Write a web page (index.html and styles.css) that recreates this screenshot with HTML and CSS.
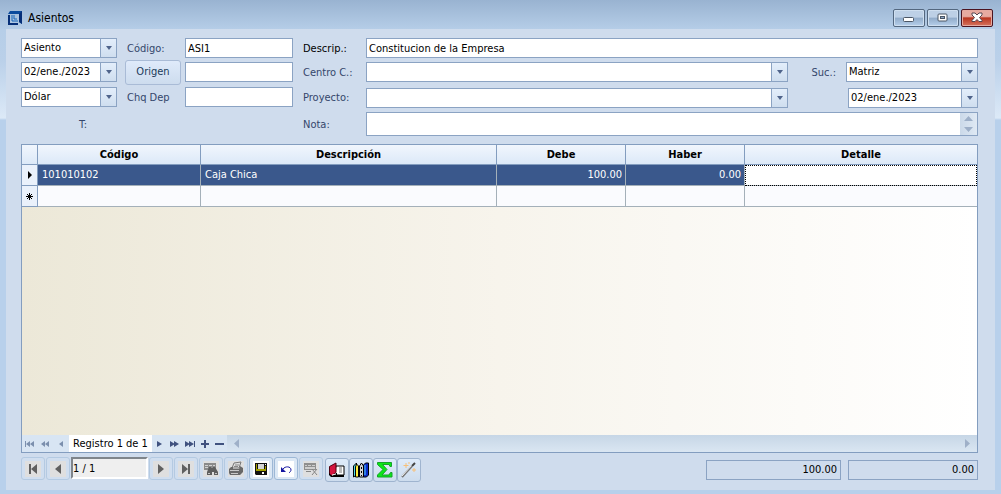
FILE: index.html
```html
<!DOCTYPE html>
<html lang="es">
<head>
<meta charset="utf-8">
<title>Asientos</title>
<link rel="stylesheet" href="styles.css">
</head>
<body>
<div class="window">
  <header class="titlebar">
    <svg class="logo" width="14" height="14" viewBox="0 0 14 14"><path d="M2 0h12v13l-3-2V3H0z" fill="#0a4a9c"/><path d="M11 3l3-3v13l-3-2z" fill="#062f78"/><path d="M1 4v9h9" fill="none" stroke="#062f78" stroke-width="2"/><path d="M4 4v6h6" fill="none" stroke="#1565b8"/><path d="M6 4v4h3" fill="none" stroke="#1565b8"/></svg>
    <h1 class="title">Asientos</h1>
    <div class="window-buttons">
      <button class="win-btn" aria-label="Minimizar"><svg width="12" height="12" viewBox="0 0 12 12"><rect x=".5" y="5.500" width="10" height="4" rx="1" fill="#fff" stroke="#4b5665"/></svg></button>
      <button class="win-btn" aria-label="Maximizar"><svg width="12" height="12" viewBox="0 0 12 12"><rect x="1" y="2" width="9" height="7" rx="1" fill="#fff" stroke="#4b5665"/><rect x="3.500" y="4.500" width="4" height="2" fill="#8ba5c4" stroke="#4b5665"/></svg></button>
      <button class="win-btn close" aria-label="Cerrar"><svg width="12" height="12" viewBox="0 0 12 12"><path d="M1 1h3l2 2 2-2h3v2L8.500 5.500 11 8.500v1H8l-2-2-2 2H1v-1l2.500-3L1 3z" fill="#fff" stroke="#564650"/></svg></button>
    </div>
  </header>
  <main class="panel">
    <form class="form">
      <div class="combo"><select aria-label="Tipo"><option>Asiento</option></select><span class="drop"></span></div>
      <label class="label" for="codigo">Código:</label>
      <input class="field" id="codigo" value="ASI1">
      <label class="label strong" for="descrip">Descrip.:</label>
      <input class="field to-end" id="descrip" value="Constitucion de la Empresa">

      <div class="combo"><input aria-label="Fecha" value="02/ene./2023"><button type="button" class="drop" aria-label="Abrir calendario"></button></div>
      <button type="button" class="origin">Origen</button>
      <input class="field" aria-label="Origen">
      <label class="label" for="centro">Centro C.:</label>
      <div class="combo"><select id="centro"><option></option></select><span class="drop"></span></div>
      <label class="label right" for="suc">Suc.:</label>
      <div class="combo"><select id="suc"><option>Matriz</option></select><span class="drop"></span></div>

      <div class="combo"><select aria-label="Moneda"><option>Dólar</option></select><span class="drop"></span></div>
      <label class="label" for="chq">Chq Dep</label>
      <input class="field" id="chq">
      <label class="label" for="proyecto">Proyecto:</label>
      <div class="combo low"><select id="proyecto"><option></option></select><span class="drop"></span></div>
      <div class="combo low date"><input aria-label="Fecha contable" value="02/ene./2023"><button type="button" class="drop" aria-label="Abrir calendario"></button></div>

      <span class="label type">T:</span>
      <label class="label note-label" for="nota">Nota:</label>
      <div class="note to-end"><textarea id="nota"></textarea>
        <span class="spin"><svg width="9" height="16" viewBox="0 0 9 16"><path d="M4.500 0L9 5H0zM0 11h9l-4.500 5z" fill="#9dafc8"/></svg></span></div>
    </form>

    <section class="sheet">
      <table class="entries">
        <colgroup><col class="c-mark"><col class="c-code"><col class="c-desc"><col class="c-debit"><col class="c-credit"><col></colgroup>
        <thead><tr><th></th><th>Código</th><th>Descripción</th><th>Debe</th><th>Haber</th><th>Detalle</th></tr></thead>
        <tbody>
          <tr class="selected"><td class="mark"><svg width="4" height="8" viewBox="0 0 4 8"><path d="M0 0l4 4-4 4z"/></svg></td><td>101010102</td><td>Caja Chica</td><td class="num">100.00</td><td class="num">0.00</td><td class="focus"></td></tr>
          <tr class="new"><td class="mark"><svg width="7" height="7" viewBox="0 0 7 7"><path d="M3 0h1v7H3zM0 3h7v1H0zM1 1h1v1H1zM5 1h1v1H5zM1 5h1v1H1zM5 5h1v1H5zM2 2h3v3H2z"/></svg></td><td></td><td></td><td></td><td></td><td></td></tr>
        </tbody>
      </table>
      <div class="void"></div>
      <nav class="records">
        <button aria-label="Primero" class="first"><svg width="10" height="8" viewBox="0 0 10 8"><path d="M0 1h1v6H0zM5 1v6L1 4zM9 1v6L5 4z"/></svg></button>
        <button aria-label="Página anterior" class="dim"><svg width="8" height="8" viewBox="0 0 8 8"><path d="M4 1v6L0 4zM8 1v6L4 4z"/></svg></button>
        <button aria-label="Anterior" class="dim"><svg width="4" height="8" viewBox="0 0 4 8"><path d="M4 1v6L0 4z"/></svg></button>
        <span class="position">Registro 1 de 1</span>
        <button aria-label="Siguiente"><svg width="5" height="8" viewBox="0 0 5 8"><path d="M0 1l5 3-5 3z"/></svg></button>
        <button aria-label="Página siguiente"><svg width="9" height="8" viewBox="0 0 9 8"><path d="M0 1l5 3-5 3zM4 1l5 3-5 3z"/></svg></button>
        <button aria-label="Último"><svg width="10" height="8" viewBox="0 0 10 8"><path d="M0 1l5 3-5 3zM4 1l5 3-5 3zM9 1h1v6H9z"/></svg></button>
        <button aria-label="Agregar"><svg width="8" height="8" viewBox="0 0 8 8"><path d="M3 0h2v3h3v2H5v3H3V5H0V3h3z"/></svg></button>
        <button aria-label="Eliminar"><svg width="9" height="8" viewBox="0 0 9 8"><path d="M0 3h9v2H0z"/></svg></button>
        <span class="scroll"><svg width="5" height="9" viewBox="0 0 5 9"><path d="M5 0v9L0 4.500z"/></svg><svg width="5" height="9" viewBox="0 0 5 9"><path d="M0 0l5 4.500L0 9z"/></svg></span>
      </nav>
    </section>

    <footer class="toolbar">
      <div class="tools">
        <button class="tool off" aria-label="Primero"><svg width="16" height="16" viewBox="0 0 16 16"><path d="M4 3h2v10H4zM12 3v10L6 8z" fill="#606060"/></svg></button>
        <button class="tool off" aria-label="Anterior"><svg width="16" height="16" viewBox="0 0 16 16"><path d="M11 3v10L5 8z" fill="#606060"/></svg></button>
        <input class="pager" aria-label="Posición" value="1 / 1">
        <button class="tool off" aria-label="Siguiente"><svg width="16" height="16" viewBox="0 0 16 16"><path d="M5 3v10l6-5z" fill="#606060"/></svg></button>
        <button class="tool off" aria-label="Último"><svg width="16" height="16" viewBox="0 0 16 16"><path d="M4 3v10l6-5zM10 3h2v10h-2z" fill="#606060"/></svg></button>
        <button class="tool off" aria-label="Buscar"><svg width="16" height="16" viewBox="0 0 16 16"><path d="M1 2h12v7H1z" fill="#8a8a8a"/><path d="M2 4h3v1H2zM6 4h3v1H6zM10 4h2v1h-2zM2 6h3v1H2z" fill="#d2d2d2"/><path d="M6 6h2v1h2V6h2l3 5v3h-4v-3h-2v3H4v-3z" fill="#5e5e5e"/><path d="M5 12h2v1H5zM12 12h2v1h-2z" fill="#c5c5c5"/></svg></button>
        <button class="tool off" aria-label="Imprimir"><svg width="16" height="16" viewBox="0 0 16 16"><path d="M6 2l7-1-2 6H4z" fill="#ddd" stroke="#777"/><path d="M7 4h4M6 5.500h4" stroke="#888"/><path d="M1 8l2-2h2v2h6l1-3 3 2v4l-3 3H2l-1-2z" fill="#686868"/><path d="M2 9h9v1H2zM3 12h7v1H3z" fill="#c8c8c8"/></svg></button>
        <button class="tool on" aria-label="Guardar"><svg width="16" height="16" viewBox="0 0 16 16"><path d="M2 2h12v12H3l-1-1z" fill="#111"/><path d="M3 3h1v6H3zM12 5h1v4h-1zM3 8h10v2H3z" fill="#a2a000"/><path d="M5 3h6v5H5z" fill="#d4d4d4"/><path d="M5 10h6v4H5z" fill="#111"/><path d="M9 11h2v2H9zM12 3h1v1h-1z" fill="#fff"/></svg></button>
        <button class="tool on" aria-label="Deshacer"><svg width="16" height="16" viewBox="0 0 16 16"><path d="M3 6v5h5z" fill="#1515a0"/><path d="M5 8c2-3 8-3 8 1 0 1-1 2-2 3" fill="none" stroke="#1515a0"/></svg></button>
        <button class="tool off" aria-label="Quitar"><svg width="16" height="16" viewBox="0 0 16 16"><path d="M1 2h12v7H1z" fill="#8f8f8f"/><path d="M2 4h2v1H2zM5 4h3v1H5zM9 4h3v1H9zM2 6h10v2H2z" fill="#cfcfcf"/><path d="M3 10.500h5M9 8l5 6M14 8l-5 6" fill="none" stroke="#858585"/></svg></button>
      </div>
      <div class="actions">
        <button class="tool act" aria-label="Libro"><svg width="18" height="18" viewBox="0 0 18 18"><path d="M8 5h8v9H6z" fill="#fff" stroke="#000"/><path d="M11 7h3M11 9h3M11 11h3" stroke="#777"/><path d="M1.500 5.500L8 2v9.500L3 15l-1.500-2z" fill="#d4143f" stroke="#50000f"/><path d="M1 12l3 3 4-3h1v2h7v2H3l-2-2z" fill="#000"/><path d="M4 14l4-1" stroke="#fff"/></svg></button>
        <button class="tool act" aria-label="Libros"><svg width="18" height="18" viewBox="0 0 18 18"><path d="M1.500 5l3-3v12l-3 2z" fill="#50ddec" stroke="#000"/><path d="M4.500 3l2 2v11h-3V6z" fill="#ffef3c" stroke="#000"/><path d="M7.500 5l2-3 2 3v11h-4z" fill="#d4d4d4" stroke="#000"/><path d="M9.500 6v2M9.500 10v2M9.500 14v1" stroke="#000"/><path d="M11.500 4l2-2h3v12l-2 2h-3z" fill="#0b2bc9" stroke="#000"/><path d="M13 4v10" stroke="#52d5ff"/></svg></button>
        <button class="tool act" aria-label="Totalizar"><svg width="18" height="18" viewBox="0 0 18 18"><path d="M1.500 1.500h14v4h-1.500l-1-2H6.500l4.500 5-5 5.500h7l1.500-2.500h1.500v4.500H1.500V14L7 8.500l-5.500-5z" fill="#0be817" stroke="#16a12b"/></svg></button>
        <button class="tool act" aria-label="Asistente"><svg width="18" height="18" viewBox="0 0 18 18"><path d="M2 16L12 5" stroke="#777" stroke-width="2"/><path d="M2 15L12 4" stroke="#eee"/><path d="M12 5l3-3" stroke="#444" stroke-width="2"/><path d="M6 2v5M3.500 4.500h5M14 7v4M12 9h4M9 1v2" stroke="#f7c078"/></svg></button>
      </div>
      <div class="totals">
        <output class="total wide">100.00</output>
        <output class="total">0.00</output>
      </div>
    </footer>
  </main>
</div>
</body>
</html>
```

FILE: styles.css
```css
* { box-sizing: border-box; }
body {
  margin: 0;
  font: 11px/14px "DejaVu Sans Condensed", "DejaVu Sans", sans-serif;
  color: #000;
}
button, input, select, textarea {
  margin: 0; padding: 0; border: 0; border-radius: 0;
  font: inherit; color: inherit; background: none; outline: 0;
}
svg { display: block; flex: none; }
.window {
  min-height: 100vh;
  display: flex;
  flex-direction: column;
  padding: 0 6px 4px;
  background: linear-gradient(#99b3d1 0, #b6cee8 30px, #bad0e9 60px, #dce9f7 118px, #b8d0eb 120px);
}
.titlebar { height: 29px; display: flex; align-items: center; padding: 6px 2px 0; }
.title { margin: 0 0 0 6px; font-size: 12px; font-weight: normal; line-height: 16px; }
.window-buttons { display: flex; gap: 2px; margin-left: auto; }
.win-btn {
  width: 32px; height: 18px;
  display: grid; place-items: center;
  border: 1px solid #53677f; border-radius: 2px;
  background: linear-gradient(#bdd0e6 0 45%, #91abc9 50%, #b6cfeb);
  box-shadow: inset 0 0 0 1px #cfdff0;
}
.close {
  border-color: #4b1420;
  background: linear-gradient(#e7aaa0 0 40%, #b93620 50%, #d6745f);
  box-shadow: inset 0 0 0 1px #e5aaa1;
}
.panel {
  flex: 1;
  display: flex; flex-direction: column;
  padding: 9px 17px 8px 15px;
  background: #cfdced;
}
.form {
  display: grid;
  grid-template-columns: 96px 60px 108px 65px 1fr 50px 132px;
  grid-template-rows: 20px 20px 22px 24px;
  gap: 4px;
  align-items: center;
}
.label { padding: 2px 0 0 6px; color: #34466b; white-space: nowrap; }
.strong { color: #000; }
.right { text-align: right; padding-right: 6px; }
.field { width: 100%; height: 20px; padding: 0 2px; border: 1px solid #8ba3c3; background: #fff; }
.to-end { grid-column: 5 / -1; }
.combo { display: flex; height: 20px; min-width: 0; border: 1px solid #8ba3c3; background: #fff; }
.combo select, .combo input { flex: 1; width: 0; min-width: 0; padding: 0 2px; appearance: none; }
.drop {
  width: 16px;
  display: grid; place-items: center;
  border-left: 1px solid #8ba3c3;
  background: linear-gradient(#e3eefb, #cfdeef);
}
.drop::before { content: ""; border: 3px solid transparent; border-top: 4px solid #4f648b; border-bottom: 0; }
.low { align-self: end; }
.date { grid-column: 7; margin-left: 2px; }
.origin {
  height: 25px; margin-left: 4px;
  color: #203a5a;
  border: 1px solid #a9bbd6; border-radius: 3px;
  background: linear-gradient(#dfeafa, #cddcee);
}
.type { grid-column: 1; padding-left: 58px; }
.note-label { grid-column: 4; }
.note { display: flex; height: 24px; border: 1px solid #8ba3c3; background: #fff; }
.note textarea { flex: 1; padding: 3px; resize: none; overflow: hidden; }
.spin { width: 17px; display: grid; place-items: center; background: linear-gradient(90deg, #cbd9e9, #dfe9f4); }

.sheet {
  flex: 1;
  display: flex; flex-direction: column;
  margin-top: 8px;
  border: 1px solid #839dbf;
}
.entries { width: 100%; table-layout: fixed; border-collapse: separate; border-spacing: 0; }
.c-mark { width: 16px; }
.c-code { width: 163px; }
.c-desc { width: 296px; }
.c-debit { width: 129px; }
.c-credit { width: 119px; }
.entries th, .entries td { height: 21px; padding: 0 4px; border: solid #a4b0b9; border-width: 0 1px 1px 0; }
.entries th { height: 20px; padding: 0; border-color: #839dbf; background: linear-gradient(#f1f6fd, #dce9f8); }
.entries th:last-child, .entries td:last-child { border-right: 0; }
.selected { color: #fff; background: #3a588c; }
.new { background: #fafbfe; }
.entries .num { padding-right: 3px; text-align: right; }
.entries .mark { padding: 0; border-color: #839dbf; background: #eaf1fb; }
.mark svg { margin: auto; }
.entries .focus { background: #fff; outline: 1px dotted #000; outline-offset: -1px; }
.void { flex: 1; min-height: 60px; background: linear-gradient(90deg, #ece8d8, #f7f4ec 50%, #fff); }
.records { height: 17px; display: flex; align-items: stretch; background: linear-gradient(#c6d6e6, #dae6f2); }
.records button { width: 15px; display: grid; place-items: center; fill: #40527f; background: #d8e5f3; }
.records .dim { width: 16px; fill: #7b8fad; }
.records .first { fill: #7b8fad; }
.position { width: 83px; text-align: center; line-height: 17px; background: #fff; white-space: nowrap; }
.scroll { flex: 1; display: flex; align-items: center; justify-content: space-between; padding: 0 7px; fill: #9fb0c8; }

.toolbar { display: flex; align-items: flex-start; margin-top: 4px; }
.tools { display: flex; gap: 1px; }
.tool {
  width: 24px; height: 23px;
  display: grid; place-items: center;
  border: 1px solid #b4cae2; border-radius: 3px;
  background: #d0deef;
}
.off svg { background: #dfdfdf; }
.on { border-color: #9db8d6; background: #dce8f5; }
.on svg { background: #fff; }
.pager { width: 77px; height: 22px; padding: 0; border: 2px solid; border-color: #7f858b #fff #fff #7f858b; background: #efefef; }
.actions { display: flex; margin: 1px 0 0 2px; }
.act { height: 24px; border-color: #9fb4cf; background: linear-gradient(#deebfa, #cddced); }
.totals { display: flex; gap: 7px; margin: 3px 0 0 auto; }
.total { width: 130px; height: 20px; padding: 2px 3px; border: 1px solid #8ba3c3; text-align: right; }
.wide { width: 135px; }
```
